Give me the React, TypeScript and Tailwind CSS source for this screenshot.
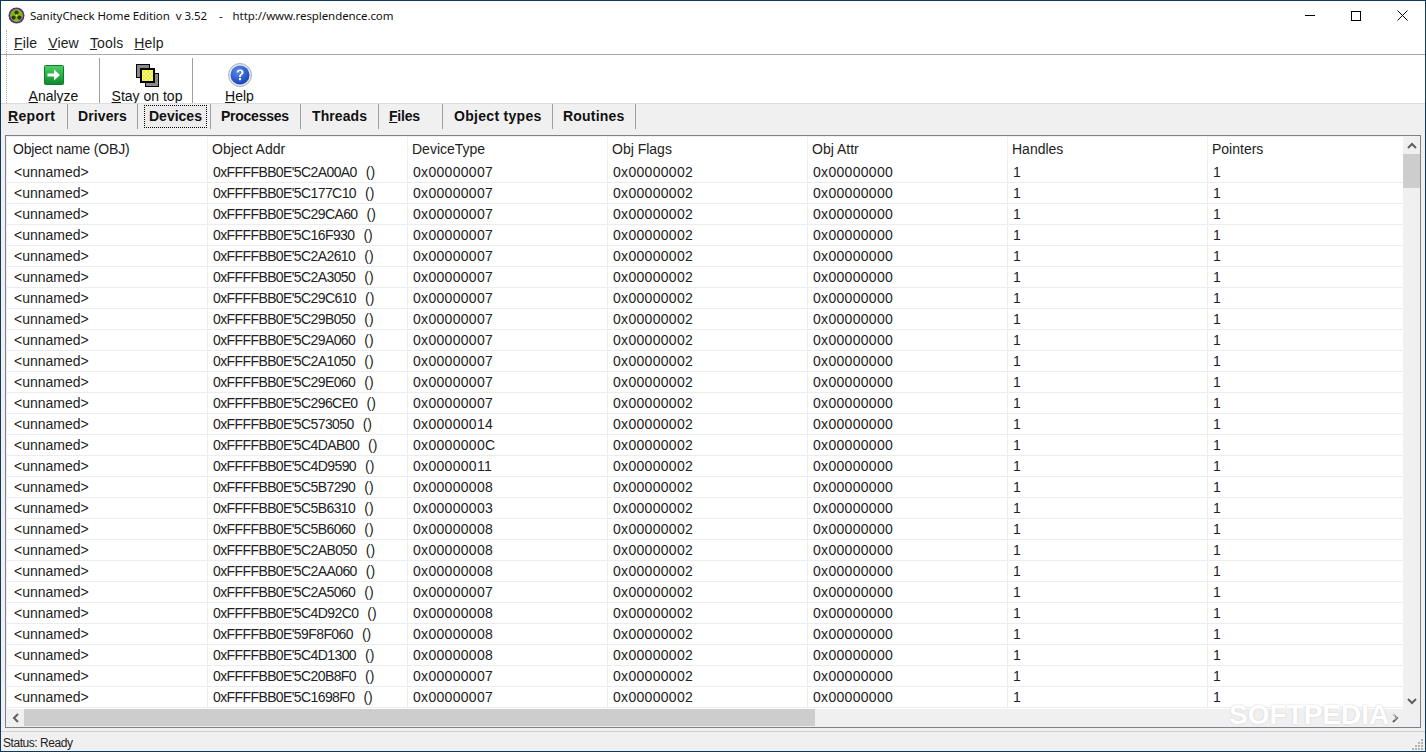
import React from "react";

const rows: [string, string][] = [
  ["5C2A00A0", "07"], ["5C177C10", "07"], ["5C29CA60", "07"], ["5C16F930", "07"], ["5C2A2610", "07"],
  ["5C2A3050", "07"], ["5C29C610", "07"], ["5C29B050", "07"], ["5C29A060", "07"], ["5C2A1050", "07"],
  ["5C29E060", "07"], ["5C296CE0", "07"], ["5C573050", "14"], ["5C4DAB00", "0C"], ["5C4D9590", "11"],
  ["5C5B7290", "08"], ["5C5B6310", "03"], ["5C5B6060", "08"], ["5C2AB050", "08"], ["5C2AA060", "08"],
  ["5C2A5060", "07"], ["5C4D92C0", "08"], ["59F8F060", "08"], ["5C4D1300", "08"], ["5C20B8F0", "07"],
  ["5C1698F0", "07"],
];

const headers = ["Object name (OBJ)", "Object Addr", "DeviceType", "Obj Flags", "Obj Attr", "Handles", "Pointers"];

const tabs: { label: React.ReactNode; w: string; pad: string; track: string; active?: boolean }[] = [
  { label: <><u>R</u>eport</>, w: "w-[66px]", pad: "pl-[6px]", track: "tracking-[0.35px]" },
  { label: "Drivers", w: "w-[70px]", pad: "pl-[10px]", track: "tracking-[0.1px]" },
  { label: "Devices", w: "w-[73px]", pad: "pl-[10px]", track: "", active: true },
  { label: "Processes", w: "w-[90px]", pad: "pl-[10px]", track: "tracking-[-0.25px]" },
  { label: "Threads", w: "w-[78px]", pad: "pl-[11px]", track: "tracking-[0.1px]" },
  { label: <><u>F</u>iles</>, w: "w-[64px]", pad: "pl-[10px]", track: "tracking-[-0.2px]" },
  { label: "Object types", w: "w-[110px]", pad: "pl-[11px]", track: "tracking-[0.3px]" },
  { label: "Routines", w: "w-[83px]", pad: "pl-[10px]", track: "tracking-[0.2px]" },
];

function Logo() {
  return (
    <svg width="17" height="17" viewBox="0 0 17 17">
      <circle cx="8.5" cy="8.5" r="8" fill="#5a2a8a" />
      <circle cx="8.5" cy="8.5" r="6.4" fill="#86b818" />
      <circle cx="8.5" cy="5.6" r="2.1" fill="#2a3a14" />
      <circle cx="5.6" cy="10.6" r="2.1" fill="#2a3a14" />
      <circle cx="11.4" cy="10.6" r="2.1" fill="#2a3a14" />
      <circle cx="8.5" cy="8.6" r="1" fill="#e8e23a" />
    </svg>
  );
}

function AnalyzeIcon() {
  return (
    <svg width="20" height="20" viewBox="0 0 20 20">
      <defs>
        <linearGradient id="ga" x1="0" y1="0" x2="0" y2="1">
          <stop offset="0" stopColor="#4fd06a" />
          <stop offset="1" stopColor="#0b8a2a" />
        </linearGradient>
      </defs>
      <rect x="0.5" y="0.5" width="19" height="19" rx="1" fill="url(#ga)" stroke="#0e7d2a" />
      <path d="M3.5 8.5H10V4.5l6 5.5-6 5.5v-4H3.5z" fill="#fff" />
    </svg>
  );
}

function StayIcon() {
  return (
    <svg width="23" height="23" viewBox="0 0 23 23">
      <rect x="0.5" y="0.5" width="13" height="13" fill="#8a8a8a" stroke="#000" />
      <rect x="9.5" y="9.5" width="13" height="13" fill="#8a8a8a" stroke="#000" />
      <rect x="5" y="5" width="13" height="13" fill="#ffff30" stroke="#000" strokeWidth="2" />
      <path d="M7 7h2v2H7zM11 7h2v2h-2zM15 7h2v2h-2zM9 9h2v2H9zM13 9h2v2h-2zM7 11h2v2H7zM11 11h2v2h-2zM15 11h2v2h-2zM9 13h2v2H9zM13 13h2v2h-2zM7 15h2v2H7zM11 15h2v2h-2z" fill="#e0e0a0" />
    </svg>
  );
}

function HelpIcon() {
  return (
    <svg width="24" height="24" viewBox="0 0 24 24">
      <defs>
        <radialGradient id="gh" cx="0.4" cy="0.3" r="0.8">
          <stop offset="0" stopColor="#5b8ff0" />
          <stop offset="1" stopColor="#1238b0" />
        </radialGradient>
      </defs>
      <circle cx="12" cy="12" r="11.5" fill="#e4e8f2" stroke="#a8aebc" />
      <circle cx="12" cy="12" r="9.5" fill="url(#gh)" />
      <path d="M8.7 9.6c0-2 1.5-3.2 3.5-3.2s3.4 1.1 3.4 2.9c0 2.4-2.7 2.5-2.7 4.6h-1.9c0-3 2.5-3 2.5-4.5 0-.8-.6-1.3-1.4-1.3-.9 0-1.5.6-1.6 1.5z" fill="#fff" />
      <rect x="11" y="15" width="2" height="2.2" fill="#fff" />
    </svg>
  );
}

function ToolButton({ icon, label, w, pad }: { icon: React.ReactNode; label: React.ReactNode; w: string; pad: string }) {
  return (
    <div className={`${w} ${pad} h-full flex flex-col items-center overflow-hidden`}>
      <div className="h-[34px] shrink-0 flex items-center justify-center">{icon}</div>
      <div className="text-[14px] leading-[15px] -mt-[3px] text-[#111] whitespace-nowrap">{label}</div>
    </div>
  );
}

function Chevron({ d }: { d: string }) {
  return (
    <svg width="10" height="10" viewBox="0 0 10 10">
      <path d={d} fill="none" stroke="#606060" strokeWidth="2" />
    </svg>
  );
}

export default function App() {
  return (
    <div
      className="relative w-[1426px] h-[752px] flex flex-col overflow-hidden bg-white border border-[#0f3a5e] text-black"
      style={{ fontFamily: '"Liberation Sans", Arial, sans-serif' }}
    >
      {/* title bar */}
      <div className="h-[29px] shrink-0 flex items-center pl-[7px]">
        <Logo />
        <div
          className="ml-[5px] flex text-[11.5px] tracking-[-0.08px] whitespace-pre text-[#111]"
          style={{ fontFamily: '"Noto Sans", sans-serif' }}
        >
          <span>SanityCheck Home Edition</span>
          <span className="ml-[6px]">v 3.52</span>
          <span className="ml-[12px]">-</span>
          <span className="ml-[10px]">http://www.resplendence.com</span>
        </div>
        <div className="ml-auto flex items-center h-full">
          <div className="w-[46px] flex justify-center">
            <div className="w-[10px] h-[1px] bg-black" />
          </div>
          <div className="w-[46px] mr-[1px] flex justify-center">
            <div className="w-[10px] h-[10px] border border-black" />
          </div>
          <div className="w-[45px] flex justify-center">
            <svg width="11" height="11" viewBox="0 0 11 11">
              <path d="M0.5 0.5L10.5 10.5M10.5 0.5L0.5 10.5" stroke="#000" strokeWidth="1" />
            </svg>
          </div>
        </div>
      </div>

      {/* menu */}
      <div className="h-[25px] shrink-0 flex items-center border-b border-[#a8a8a8] pl-[5px]">
        <div className="w-[1px] h-full border-l border-dotted border-[#b0b0b0]" />
        <div className="flex text-[14px] tracking-[0.15px] text-[#222] ml-[7px] gap-[11px] pt-[2px]">
          <span><u>F</u>ile</span>
          <span><u>V</u>iew</span>
          <span><u>T</u>ools</span>
          <span><u>H</u>elp</span>
        </div>
      </div>

      {/* toolbar */}
      <div className="h-[48px] shrink-0 flex pl-[5px] pt-[3px] items-stretch">
        <div className="w-[1px] border-l border-dotted border-[#b0b0b0] -mt-[3px]" />
        <ToolButton icon={<AnalyzeIcon />} label={<><u>A</u>nalyze</>} w="w-[92px]" pad="pl-[1px]" />
        <div className="w-[1px] bg-[#a0a0a0]" />
        <ToolButton icon={<StayIcon />} label={<><u>S</u>tay on top</>} w="w-[92px]" pad="pl-[2px]" />
        <div className="w-[1px] bg-[#a0a0a0]" />
        <ToolButton icon={<HelpIcon />} label={<><u>H</u>elp</>} w="w-[93px]" pad="pl-0" />
      </div>

      {/* tabs area */}
      <div className="flex-1 min-h-0 flex flex-col bg-[#f0f0f0] border-t border-[#dcdcdc]">
        <div className="h-[31px] shrink-0 flex items-start pl-[1px]">
          {tabs.map((t, i) => (
            <div key={i} className={`${t.w} ${t.pad} h-[25px] flex items-center border-r border-[#a0a0a0]`}>
              {t.active ? (
                <div className="h-[23px] px-[4px] -ml-[4px] flex items-center border border-dotted border-black bg-[#ececec] font-bold text-[14px] text-[#111] whitespace-nowrap">
                  {t.label}
                </div>
              ) : (
                <div className={`font-bold text-[14px] text-[#111] whitespace-nowrap ${t.track}`}>{t.label}</div>
              )}
            </div>
          ))}
        </div>

        {/* list frame */}
        <div className="h-[593px] shrink-0 mx-[4px] border border-[#808088] bg-[#f0f0f0] pl-[1px] pt-[1px] flex flex-col">
          <div className="flex flex-1 min-h-0">
            <div className="flex-1 min-w-0 bg-white overflow-hidden">
              <div className="flex h-[25px]">
                {headers.map((h, i) => (
                  <div
                    key={h}
                    className={`shrink-0 h-full flex items-center text-[14px] text-[#222] border-r border-[#f0f0f0] ${i === 0 ? "w-[201px] pl-[6px] tracking-[-0.2px]" : "w-[200px] pl-[4px]"}`}
                  >
                    {h}
                  </div>
                ))}
              </div>
              {rows.map(([addr, dev], i) => {
                const plain = ["<unnamed>", null, `0x000000${dev}`, "0x00000002", "0x00000000", "1", "1"];
                return (
                  <div key={i} className="flex h-[21px] border-b border-[#ececec]">
                    {plain.map((c, j) => (
                      <div
                        key={j}
                        className={`shrink-0 h-full flex items-center whitespace-pre text-[14px] text-[#222] border-r border-[#ececec] ${j === 0 ? "w-[201px] pl-[7px]" : "w-[200px] pl-[5px]"} ${j >= 2 && j <= 4 ? "tracking-[0.3px]" : ""}`}
                      >
                        {c === null ? (
                          <>
                            <span className="tracking-[-0.6px]">{`0xFFFFBB0E'${addr}`}</span>
                            <span className="ml-[9px]">()</span>
                          </>
                        ) : (
                          c
                        )}
                      </div>
                    ))}
                  </div>
                );
              })}
            </div>
            <div className="w-[17px] shrink-0 flex flex-col bg-[#f0f0f0]">
              <div className="h-[17px] flex items-center justify-center">
                <Chevron d="M1 7L5 3L9 7" />
              </div>
              <div className="h-[34px] bg-[#cdcdcd]" />
              <div className="flex-1" />
              <div className="h-[17px] flex items-center justify-center">
                <Chevron d="M1 3L5 7L9 3" />
              </div>
            </div>
          </div>
          <div className="h-[17px] shrink-0 flex pr-[17px] mb-[1px]">
            <div className="w-[17px] flex items-center justify-center">
              <Chevron d="M7 1L3 5L7 9" />
            </div>
            <div className="w-[791px] bg-[#cdcdcd]" />
            <div className="flex-1" />
            <div className="w-[17px] flex items-center justify-center">
              <Chevron d="M3 1L7 5L3 9" />
            </div>
          </div>
        </div>

        {/* status */}
        <div className="flex-1 min-h-0 mt-[3px] border-t border-[#d0d0d0] flex items-center pl-[2px] text-[12px] tracking-[-0.45px] text-[#222] relative">
          <span className="pt-[3px]">Status: Ready</span>
          <svg className="absolute right-[1px] bottom-[1px]" width="12" height="12" viewBox="0 0 12 12">
            <path d="M9 1h2v2H9zM6 4h2v2H6zM9 4h2v2H9zM3 7h2v2H3zM6 7h2v2H6zM9 7h2v2H9zM0 10h2v2H0zM3 10h2v2H3zM6 10h2v2H6zM9 10h2v2H9z" fill="#b4b4b4" />
          </svg>
        </div>
      </div>

      {/* watermark */}
      <div
        className="absolute left-[1228px] top-[696px] text-[28px] leading-[36px] font-bold text-white [text-shadow:0_0_2px_#c8c8c8] pointer-events-none"
        style={{ fontFamily: '"Liberation Sans", sans-serif' }}
      >
        SOFTPEDIA
        <sup className="text-[9px] font-normal ml-[1px]">®</sup>
      </div>
    </div>
  );
}
